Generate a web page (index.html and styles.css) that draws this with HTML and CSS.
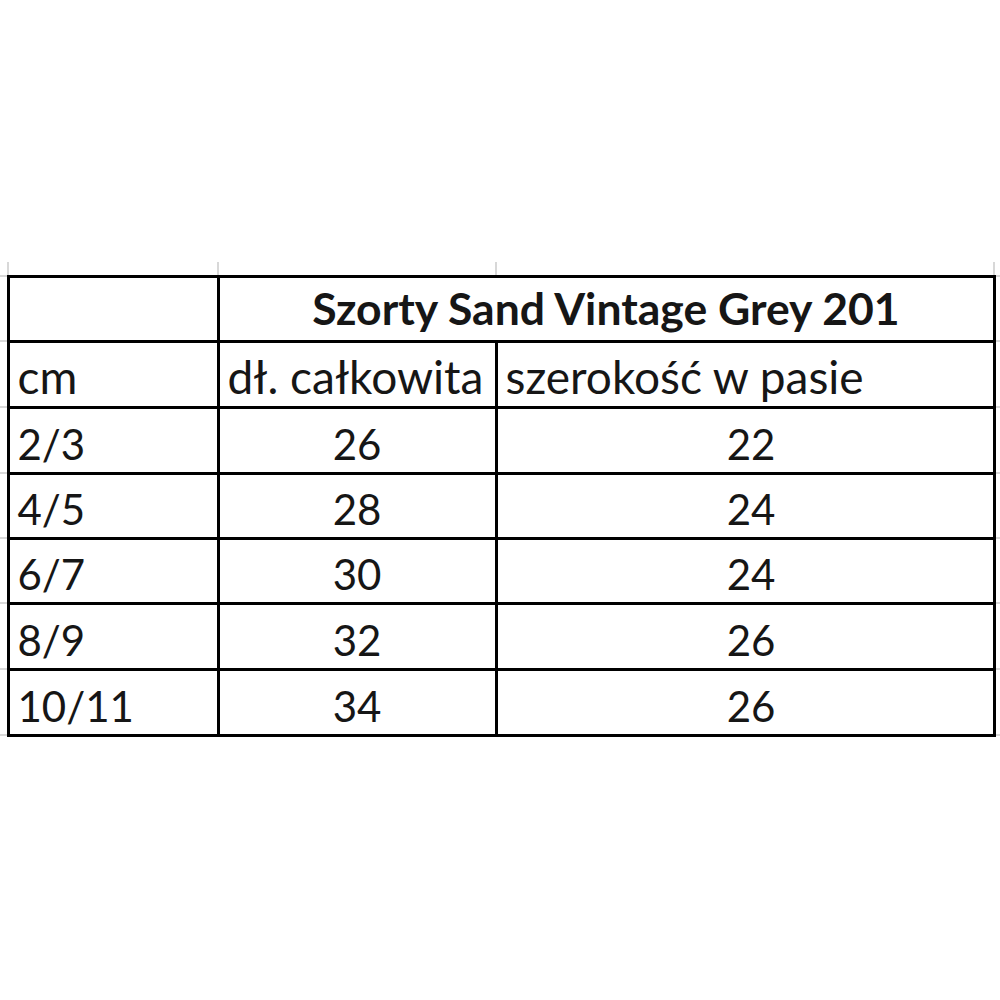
FILE: index.html
```html
<!DOCTYPE html>
<html lang="pl">
<head>
<meta charset="utf-8">
<title>Szorty Sand Vintage Grey 201</title>
<link rel="stylesheet" href="styles.css">
</head>
<body>
<table class="sheet">
  <colgroup>
    <col class="col-stub-l">
    <col class="col-size">
    <col class="col-len">
    <col class="col-waist">
    <col class="col-stub-r">
  </colgroup>
  <tr class="row-stub">
    <td class="stub"></td>
    <td class="stub grid"></td>
    <td class="stub grid"></td>
    <td class="stub grid"></td>
    <td class="stub grid"></td>
  </tr>
  <tr class="row r1">
    <td class="stub side"></td>
    <td class="cell"></td>
    <td class="cell title" colspan="2">Szorty Sand Vintage Grey 201</td>
    <td class="stub side"></td>
  </tr>
  <tr class="row r2">
    <td class="stub side"></td>
    <td class="cell">cm</td>
    <td class="cell">dł. całkowita</td>
    <td class="cell">szerokość w pasie</td>
    <td class="stub side"></td>
  </tr>
  <tr class="row r2">
    <td class="stub side"></td>
    <td class="cell digits">2/3</td>
    <td class="cell digits num">26</td>
    <td class="cell digits num wide">22</td>
    <td class="stub side"></td>
  </tr>
  <tr class="row r1">
    <td class="stub side"></td>
    <td class="cell digits">4/5</td>
    <td class="cell digits num">28</td>
    <td class="cell digits num wide">24</td>
    <td class="stub side"></td>
  </tr>
  <tr class="row r1">
    <td class="stub side"></td>
    <td class="cell digits">6/7</td>
    <td class="cell digits num">30</td>
    <td class="cell digits num wide">24</td>
    <td class="stub side"></td>
  </tr>
  <tr class="row r2">
    <td class="stub side"></td>
    <td class="cell digits">8/9</td>
    <td class="cell digits num">32</td>
    <td class="cell digits num wide">26</td>
    <td class="stub side"></td>
  </tr>
  <tr class="row r2">
    <td class="stub side"></td>
    <td class="cell digits">10/11</td>
    <td class="cell digits num">34</td>
    <td class="cell digits num wide">26</td>
    <td class="stub side"></td>
  </tr>
</table>
</body>
</html>
```
FILE: styles.css
```css
html, body {
  margin: 0;
  padding: 0;
  background: #ffffff;
}

.sheet {
  margin-top: 262px;
  width: 1000px;
  table-layout: fixed;
  border-collapse: collapse;
  font-family: Lato, "Liberation Sans", sans-serif;
  font-size: 46px;
  color: #161616;
}

.col-stub-l { width: 8px; }
.col-size { width: 210px; }
.col-len { width: 278px; }
.col-waist { width: 498px; }
.col-stub-r { width: 6px; }

.row-stub { height: 14px; }
.r1 { height: 65px; }
.r2 { height: 66px; }

.stub {
  padding: 0;
}

.grid {
  border-left: 2px solid #d8d8d8;
}

.side {
  border-top: 2px solid #d8d8d8;
  border-bottom: 2px solid #d8d8d8;
}

.cell {
  border: 3px solid #000;
  padding: 0 0 6px 8px;
  vertical-align: bottom;
  line-height: 1;
  white-space: nowrap;
  overflow: hidden;
}

.digits {
  font-size: 42px;
  padding-bottom: 7px;
}

.title {
  font-size: 44.5px;
  font-weight: 700;
  text-align: center;
  padding-left: 0;
  padding-bottom: 9px;
}

.num {
  text-align: center;
  padding-left: 0;
}

.num.wide {
  padding-left: 12px;
}
```
